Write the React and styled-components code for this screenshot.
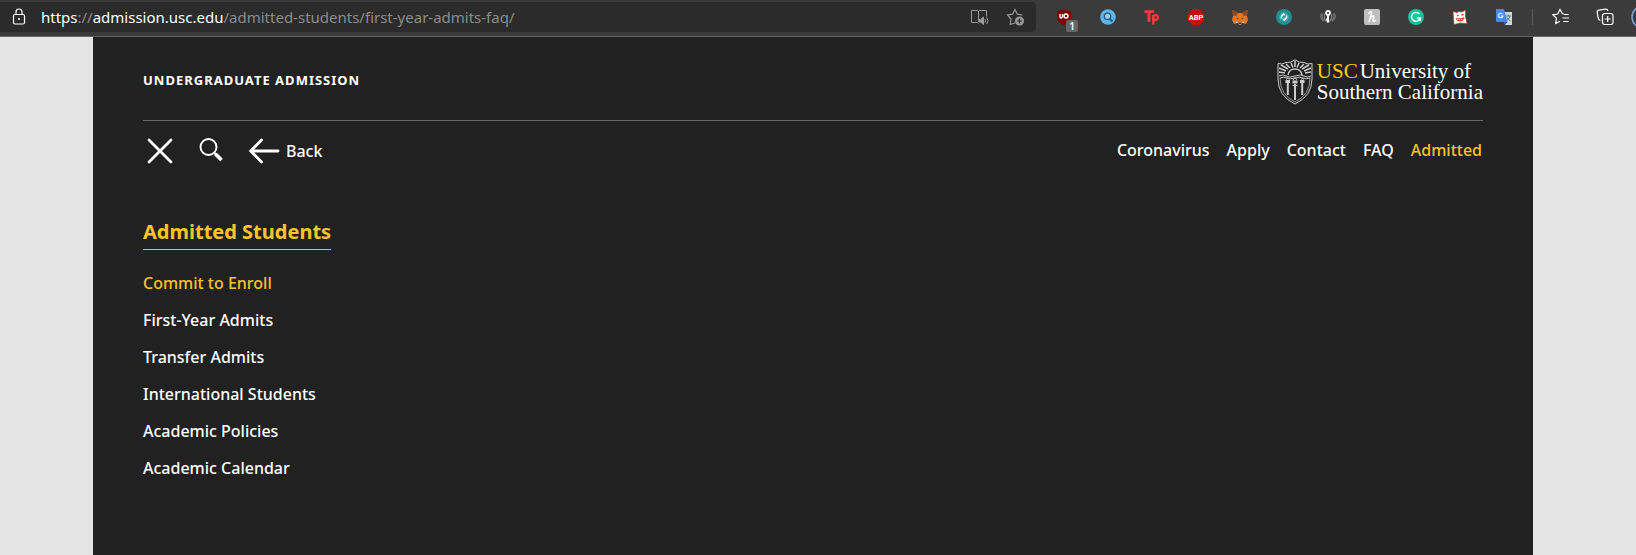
import styled, { createGlobalStyle } from "styled-components";

const GlobalStyle = createGlobalStyle`
  *,
  *::before,
  *::after {
    box-sizing: border-box;
  }

  body {
    margin: 0;
    background: #e4e4e4;
    font-family: "Noto Sans", "Open Sans", sans-serif;
    color: #fff;
  }

  a {
    color: inherit;
    text-decoration: none;
  }

  button {
    display: flex;
    align-items: center;
    padding: 0;
    border: 0;
    background: none;
    color: inherit;
    font: inherit;
    cursor: pointer;
  }

  svg {
    display: block;
    flex: none;
  }
`;

const Toolbar = styled.div`
  display: flex;
  align-items: center;
  height: 37px;
  padding: 2px 0 4px;
  overflow: hidden;
  background: #3b3b3b;
  border-bottom: 1px solid #666;
`;

const AddressBar = styled.div`
  flex: 1;
  min-width: 0;
  display: flex;
  align-items: center;
  gap: 16px;
  height: 30px;
  padding: 0 10px 0 9px;
  border-radius: 0 4px 4px 0;
  background: #2b2b2b;
`;

const Url = styled.a`
  flex: 1;
  min-width: 0;
  margin-left: -4px;
  overflow: hidden;
  white-space: nowrap;
  font-size: 15px;
  line-height: 30px;
  color: #8c8c8c;
`;

const UrlHost = styled.span`
  color: #fff;
`;

const Extensions = styled.div`
  display: flex;
  align-items: center;
  gap: 20px;
  padding: 0 14px 0 16px;
`;

const Extension = styled.button`
  position: relative;
  justify-content: center;
  width: 24px;
  height: 28px;
`;

const Badge = styled.span`
  position: absolute;
  right: -2px;
  bottom: -1px;
  width: 12px;
  border-radius: 2px;
  background: #666;
  font-size: 10px;
  font-weight: 600;
  line-height: 12px;
  text-align: center;
`;

const Divider = styled.span`
  width: 1px;
  height: 16px;
  margin: 0 -4px;
  background: #5c5c5c;
`;

const Profile = styled.button`
  flex: none;
  width: 5px;
  height: 28px;
  overflow: hidden;
`;

const Page = styled.div`
  min-height: calc(100vh - 37px);
  margin: 0 103px 0 93px;
  padding: 0 50px 40px;
  background: #212121;
`;

const Header = styled.header`
  display: flex;
  align-items: flex-start;
  justify-content: space-between;
  height: 84px;
  padding-top: 22px;
  border-bottom: 1px solid #666;
`;

const SiteTitle = styled.a`
  padding-top: 11px;
  font-size: 13px;
  font-weight: 700;
  line-height: 20px;
  letter-spacing: 1px;
  text-transform: uppercase;
`;

const Logo = styled.a`
  display: flex;
  gap: 4px;
`;

const Wordmark = styled.span`
  padding-top: 2px;
  font-family: "Liberation Serif", serif;
  font-size: 21px;
  line-height: 21px;
  white-space: nowrap;
`;

const Usc = styled.span`
  margin-right: 2px;
  color: #fc0;
`;

const NavBar = styled.nav`
  display: flex;
  align-items: center;
  justify-content: space-between;
  height: 60px;
  font-size: 16px;
  font-weight: 500;
`;

const Controls = styled.div`
  display: flex;
  align-items: center;
  gap: 26px;
  padding-left: 4px;
`;

const BackButton = styled.button`
  gap: 6px;
  line-height: 24px;
`;

const NavLinks = styled.div`
  display: flex;
  gap: 17px;
  padding: 0 1px 2px 0;
`;

const NavLink = styled.a`
  color: ${({ $active }) => ($active ? "#ffc425" : "#fff")};
`;

const Section = styled.main`
  display: flex;
  flex-direction: column;
  align-items: flex-start;
  padding-top: 35px;
`;

const SectionTitle = styled.h2`
  margin: 0 0 15px;
  padding-bottom: 1px;
  border-bottom: 1px solid #ffc425;
  color: #ffc425;
  font-size: 20px;
  font-weight: 700;
  line-height: 32px;
`;

const Menu = styled.ul`
  margin: 0;
  padding: 0;
  list-style: none;
  font-size: 16px;
  font-weight: 500;
  line-height: 37px;
`;

const extensions = [
  {
    name: "uBlock Origin",
    badge: "1",
    icon: (
      <svg width="16" height="16" viewBox="0 0 16 16">
        <path d="M8 0 Q11 2 15 2 V8 Q15 13 8 16 Q1 13 1 8 V2 Q5 2 8 0Z" fill="#800000" />
        <path d="M4 5V7.500Q4 9 5.200 9T6.500 7.500V5" fill="none" stroke="#fff" strokeWidth="1.400" />
        <circle cx="10" cy="7" r="2" fill="none" stroke="#fff" strokeWidth="1.400" />
      </svg>
    ),
  },
  {
    name: "Image search",
    icon: (
      <svg width="16" height="16" viewBox="0 0 16 16">
        <circle cx="8" cy="8" r="7.800" fill="#5bb4ea" />
        <circle cx="7.500" cy="7.300" r="3.200" fill="#8fd0f5" stroke="#2a5878" strokeWidth="1.300" />
        <path d="M9.800 9.800 12.500 12.500" stroke="#2a5878" strokeWidth="1.800" />
      </svg>
    ),
  },
  {
    name: "Toucan",
    icon: (
      <svg width="16" height="16" viewBox="0 0 16 16" fill="none" stroke="#f83c3c" strokeWidth="2.800">
        <path d="M.500 2.600H10M5 2.600V13" />
        <path d="M9.300 6V15.500" strokeWidth="2.400" />
        <circle cx="11.500" cy="8.500" r="2.400" strokeWidth="2.200" />
      </svg>
    ),
  },
  {
    name: "Adblock Plus",
    icon: (
      <svg width="16" height="16" viewBox="0 0 16 16">
        <path d="M4.700 0H11.300L16 4.700V11.300L11.300 16H4.700L0 11.300V4.700Z" fill="#c70d0d" />
        <text x="8" y="10.700" fill="#fff" fontFamily="Roboto" fontSize="7.500" fontWeight="700" textAnchor="middle">
          ABP
        </text>
      </svg>
    ),
  },
  {
    name: "MetaMask",
    icon: (
      <svg width="16" height="16" viewBox="0 0 16 16">
        <path d="M.500 1 6 4H10L15.500 1 15 7 16 11 14 15 10 14 9 15.500H7L6 14 2 15 0 11 1 7Z" fill="#e17726" />
        <path d="M.500 1 6 4 4 7 1 6.500ZM15.500 1 10 4 12 7 15 6.500Z" fill="#8e4a1d" />
        <path d="M3.500 14 4.500 12 6 14 7 13H9L10 14 11.500 12 12.500 14 10 14 9 15.500H7L6 14Z" fill="#c9c2bb" />
        <path d="M4 8.500 6.500 9.500 6 10.500ZM12 8.500 9.500 9.500 10 10.500ZM6.500 13.500H9.500V15H6.500Z" fill="#2b2826" />
      </svg>
    ),
  },
  {
    name: "Sync",
    icon: (
      <svg width="16" height="16" viewBox="0 0 16 16">
        <circle cx="8" cy="8" r="8" fill="#238b91" />
        <circle cx="8" cy="8" r="5" fill="#35a0a4" />
        <path d="M5.500 9.500A3 3 0 0 1 8 5.500L7 4.500M10.500 6.500A3 3 0 0 1 8 10.500L9 11.500" fill="none" stroke="#fff" strokeWidth="1.500" />
      </svg>
    ),
  },
  {
    name: "Password key",
    icon: (
      <svg width="16" height="16" viewBox="0 0 16 16" fill="none">
        <path d="M2.500 4.500Q-.500 8 4 12M13.500 4.500Q16.500 8 12 12" stroke="#6f6f6f" strokeWidth="2.200" />
        <path d="M4.500 5Q3.500 10 7 13M11.500 5Q12.500 10 9 13" stroke="#888" strokeWidth="1.100" />
        <circle cx="8" cy="4" r="2" stroke="#fff" strokeWidth="1.800" />
        <path d="M8 6V13.500M8 10.500H6" stroke="#fff" strokeWidth="2" />
      </svg>
    ),
  },
  {
    name: "Honey",
    icon: (
      <svg width="16" height="16" viewBox="0 0 16 16">
        <rect width="16" height="16" rx="2" fill="#bdbdbd" />
        <path d="M5 13 7.500 4Q7.800 2 6.500 2.500 5.500 3.200 4.500 5M6 9.500Q9.500 5.500 10 7.500L9 11.500Q9.500 13.500 12 11" fill="none" stroke="#fff" strokeWidth="1.400" />
      </svg>
    ),
  },
  {
    name: "Grammarly",
    icon: (
      <svg width="16" height="16" viewBox="0 0 16 16">
        <circle cx="8" cy="8" r="8" fill="#15c39a" />
        <path d="M11.300 5A4.400 4.400 0 1 0 12.200 9H8.800M12.200 8.500V12" fill="none" stroke="#fff" strokeWidth="1.500" />
      </svg>
    ),
  },
  {
    name: "Comic reader",
    icon: (
      <svg width="16" height="16" viewBox="0 0 16 16">
        <path d="M1 2.500 5 3.500 7 2.500 10 3 13.500 1 13.500 8 15 14.500 8 14 2 15.500Z" fill="#fff" stroke="#c8322d" strokeWidth=".700" />
        <path d="M5 7 6.500 6M9.500 6 11.500 5.500" stroke="#c8322d" strokeWidth="1.300" />
        <path d="M3.500 9Q8 10 12.500 8 12 12.500 8 12.500 4.500 12.500 3.500 9Z" fill="#d6443f" />
        <path d="M5 10.500H11.500" stroke="#fff" strokeDasharray="1 1" />
      </svg>
    ),
  },
  {
    name: "Google Translate",
    icon: (
      <svg width="16" height="16" viewBox="0 0 16 16">
        <path d="M6 3H16V16H9Z" fill="#d5d8d9" />
        <path d="M9.500 7H15M12.200 5.500V7M14 7Q13 10.500 10 12M11 8.500Q12 10.500 14.500 12" fill="none" stroke="#607988" />
        <path d="M0 0H8L11.500 13H1Q0 13 0 12Z" fill="#4889f4" />
        <path d="M8 13H11.500L9 16Z" fill="#3057bd" />
        <path d="M6.500 5A2.300 2.300 0 1 0 7 7H4.800" fill="none" stroke="#fff" strokeWidth="1.100" />
      </svg>
    ),
  },
];

const navLinks = ["Coronavirus", "Apply", "Contact", "FAQ", "Admitted"];

const menuLinks = [
  "Commit to Enroll",
  "First-Year Admits",
  "Transfer Admits",
  "International Students",
  "Academic Policies",
  "Academic Calendar",
];

function LockIcon() {
  return (
    <svg width="20" height="20" viewBox="0 0 20 20" fill="none" stroke="#fff" strokeWidth="1.200">
      <rect x="4.500" y="7.500" width="11" height="9.500" rx="1.500" />
      <path d="M7 7.500V5Q7 2 10 2T13 5V7.500" />
      <circle cx="10" cy="12" r="1" fill="#fff" stroke="none" />
    </svg>
  );
}

function ReadAloudIcon() {
  return (
    <svg width="20" height="18" viewBox="0 0 20 18" fill="none" stroke="#999">
      <path d="M8.500 15.500 7.500 14.500H1.500V2.500H7.500L8.500 3.500 9.500 2.500H16.500V8.500M8.500 3.500V14" />
      <path d="M9 11.500H10.500L13.500 9V16.500L10.500 14H9Z" fill="#999" />
      <path d="M15 11Q16 12.700 15 14.500M16.800 9.500Q19 12.700 16.800 16" />
    </svg>
  );
}

function StarPlusIcon() {
  return (
    <svg width="20" height="18" viewBox="0 0 20 18" fill="none" stroke="#999" strokeWidth="1.200">
      <path d="M9 15 4.300 16.500 5 11 1.500 7 6.600 6.200 9 1.500 11.400 6.200 16.500 7" />
      <circle cx="13.500" cy="13" r="4.600" fill="#999" stroke="none" />
      <path d="M11 13H16M13.500 10.500V15.500" stroke="#2b2b2b" />
    </svg>
  );
}

function FavoritesIcon() {
  return (
    <svg width="18" height="18" viewBox="0 0 18 18" fill="none" stroke="#fff" strokeWidth="1.200">
      <path d="M12 6 10.500 5.800 8 1.500 5.700 6 1 6.800 4.500 10.300 3.700 15.500 8 13.200M12 6.500H17M10.500 10H17M11 13.500H17" />
    </svg>
  );
}

function CollectionsIcon() {
  return (
    <svg width="18" height="18" viewBox="0 0 18 18" fill="none" stroke="#fff" strokeWidth="1.200">
      <path d="M4.500 12.500Q2.500 12 2.200 10L1.200 4.500Q1 2.500 3 2.200L9.500 1.200Q11.500 1 12 3" />
      <rect x="6.500" y="5.500" width="10.500" height="11" rx="2.200" />
      <path d="M11.700 8V14M8.700 11H14.700" />
    </svg>
  );
}

function CloseIcon() {
  return (
    <svg width="26" height="26" viewBox="0 0 26 26" stroke="#fff" strokeWidth="2.800" strokeLinecap="round">
      <path d="M2 2 24 24M24 2 2 24" />
    </svg>
  );
}

function SearchIcon() {
  return (
    <svg width="24" height="26" viewBox="0 0 24 26" fill="none" stroke="#fff">
      <circle cx="9.500" cy="9" r="8" strokeWidth="1.900" />
      <path d="M15 14.500 17.500 17" strokeWidth="2.200" />
      <path d="M16.500 16 22.500 22" strokeWidth="3.800" />
    </svg>
  );
}

function ArrowIcon() {
  return (
    <svg width="31" height="26" viewBox="0 0 31 26" fill="none" stroke="#fff" strokeWidth="2.800" strokeLinecap="round">
      <path d="M12.500 2 1.700 13 12.500 24M2 13H29" />
    </svg>
  );
}

function Shield() {
  return (
    <svg width="36" height="46" viewBox="0 0 36 46" fill="none" stroke="#ccc">
      <path d="M1 4.500Q5 6 9 3.500 14 4 18 .800 22 4 27 3.500 31 6 35 4.500V20Q35 37 18 45 1 37 1 20Z" />
      <path d="M2 17Q6 15 9 17T18 17T27 17T34 17M3 19Q7 17.500 10 19T18 19T26 19T33 19" />
      <path d="M11 16Q12 10 18 10T25 16" strokeWidth="1.400" />
      <path d="M8 14 2 13M9 12 2 9M11 10 4 6M13 9 9 5M16 8.500 14 4M18 8V2M20 8.500 22 4M23 9 27 5M25 10 32 6M27 12 34 9M28 14 34 13" strokeWidth="1.500" />
      <path d="M3 19Q3 36 18 43 33 36 33 19" strokeWidth=".700" />
      <path d="M8.500 22.500H13M23 22.500H27.500M15.500 23H20.500" strokeWidth="3" />
      <path d="M10.800 24V36M25.200 24V36M18 25V41" strokeWidth="2" />
      <path d="M9 20.500Q11 18 12 20.500M16 21Q18 17 20 21M24 20.500Q25.500 18 27 20.500M15.500 26.500H20.500" />
    </svg>
  );
}

function App() {
  return (
    <>
      <GlobalStyle />
      <Toolbar>
        <AddressBar>
          <button aria-label="Site information">
            <LockIcon />
          </button>
          <Url href="#">
            <UrlHost>https</UrlHost>://<UrlHost>admission.usc.edu</UrlHost>
            /admitted-students/first-year-admits-faq/
          </Url>
          <button aria-label="Read aloud">
            <ReadAloudIcon />
          </button>
          <button aria-label="Add to favorites">
            <StarPlusIcon />
          </button>
        </AddressBar>
        <Extensions>
          {extensions.map(({ name, icon, badge }) => (
            <Extension key={name} aria-label={name}>
              {icon}
              {badge && <Badge>{badge}</Badge>}
            </Extension>
          ))}
          <Divider />
          <Extension aria-label="Favorites">
            <FavoritesIcon />
          </Extension>
          <Extension aria-label="Collections">
            <CollectionsIcon />
          </Extension>
        </Extensions>
        <Profile aria-label="Profile">
          <svg width="24" height="24" viewBox="0 0 24 24">
            <circle cx="12" cy="12" r="11" fill="none" stroke="#7aa7d9" strokeWidth="1.500" />
          </svg>
        </Profile>
      </Toolbar>

      <Page>
        <Header>
          <SiteTitle href="#">Undergraduate Admission</SiteTitle>
          <Logo href="#">
            <Shield />
            <Wordmark>
              <Usc>USC</Usc>University of
              <br />
              Southern California
            </Wordmark>
          </Logo>
        </Header>

        <NavBar>
          <Controls>
            <button aria-label="Close menu">
              <CloseIcon />
            </button>
            <button aria-label="Search">
              <SearchIcon />
            </button>
            <BackButton>
              <ArrowIcon />
              Back
            </BackButton>
          </Controls>
          <NavLinks>
            {navLinks.map((label) => (
              <NavLink key={label} href="#" $active={label === "Admitted"}>
                {label}
              </NavLink>
            ))}
          </NavLinks>
        </NavBar>

        <Section>
          <SectionTitle>Admitted Students</SectionTitle>
          <Menu>
            {menuLinks.map((label) => (
              <li key={label}>
                <NavLink href="#" $active={label === "Commit to Enroll"}>
                  {label}
                </NavLink>
              </li>
            ))}
          </Menu>
        </Section>
      </Page>
    </>
  );
}

export default App;
